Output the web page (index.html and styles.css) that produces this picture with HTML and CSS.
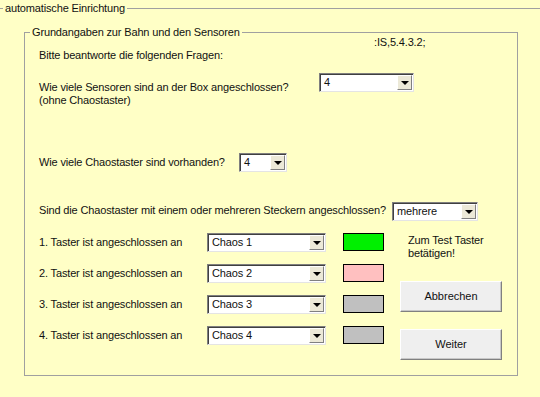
FILE: index.html
```html
<!DOCTYPE html>
<html>
<head>
  <link rel="stylesheet" href="styles.css">
</head>
<body>
  <fieldset class="outer-group">
    <legend>automatische Einrichtung</legend>

    <fieldset class="inner-group">
      <legend>Grundangaben zur Bahn und den Sensoren</legend>
      <div class="group-body">
        <div class="code">:IS,5.4.3.2;</div>
        <div class="intro">Bitte beantworte die folgenden Fragen:</div>

        <div class="question q-sensors">
          <div class="label">Wie viele Sensoren sind an der Box angeschlossen?<br>(ohne Chaostaster)</div>
          <div class="combo combo-sensors"><span>4</span><i class="combo-btn"></i></div>
        </div>

        <div class="question q-chaos">
          <div class="label">Wie viele Chaostaster sind vorhanden?</div>
          <div class="combo combo-small"><span>4</span><i class="combo-btn"></i></div>
        </div>

        <div class="question q-plugs">
          <div class="label">Sind die Chaostaster mit einem oder mehreren Steckern angeschlossen?</div>
          <div class="combo combo-plugs"><span>mehrere</span><i class="combo-btn"></i></div>
        </div>

        <div class="taster-area">
          <div class="taster-rows">
            <div class="taster-row">
              <div class="label">1. Taster ist angeschlossen an</div>
              <div class="combo combo-taster"><span>Chaos 1</span><i class="combo-btn"></i></div>
              <div class="lamp lamp-on"></div>
            </div>
            <div class="taster-row">
              <div class="label">2. Taster ist angeschlossen an</div>
              <div class="combo combo-taster"><span>Chaos 2</span><i class="combo-btn"></i></div>
              <div class="lamp lamp-pink"></div>
            </div>
            <div class="taster-row">
              <div class="label">3. Taster ist angeschlossen an</div>
              <div class="combo combo-taster"><span>Chaos 3</span><i class="combo-btn"></i></div>
              <div class="lamp"></div>
            </div>
            <div class="taster-row">
              <div class="label">4. Taster ist angeschlossen an</div>
              <div class="combo combo-taster"><span>Chaos 4</span><i class="combo-btn"></i></div>
              <div class="lamp"></div>
            </div>
          </div>

          <div class="side">
            <div class="hint">Zum Test Taster<br>betätigen!</div>
            <button class="btn btn-cancel">Abbrechen</button>
            <button class="btn btn-next">Weiter</button>
          </div>
        </div>
      </div>
    </fieldset>
  </fieldset>
</body>
</html>
```

FILE: styles.css
```css
html, body {
  margin: 0;
  width: 540px;
  height: 397px;
  overflow: hidden;
}
body {
  background-color: #ffffc6;
  font-family: "Liberation Sans", Arial, sans-serif;
  font-size: 11px;
  line-height: 13px;
  letter-spacing: -0.15px;
  color: #111;
}

/* group boxes */
fieldset {
  margin: 0;
  padding: 0;
  border: 1px solid #a0a0a0;
  min-width: 0;
}
legend {
  padding: 0 2px;
  line-height: 13px;
}
.outer-group {
  margin: 2px 0 0 -2px;
  width: 560px;
  height: 395px;
  border-bottom: 0;
}
.outer-group > legend {
  margin-left: 4px;
}
.inner-group {
  margin: 11px 0 0 25px;
  width: 494px;
  height: 350px;
  box-sizing: border-box;
}
.inner-group > legend {
  margin-left: 5px;
}
.group-body {
  padding-left: 14px;
}

.code {
  margin: -3px 0 0 335px;
}

/* question rows */
.question {
  display: flex;
  align-items: flex-start;
}
.question .label {
  flex: none;
}
.q-sensors {
  margin-top: 11px;
}
.q-sensors .label {
  width: 280px;
  margin-top: 8px;
}
.q-chaos {
  margin-top: 46px;
}
.q-chaos .label {
  width: 200px;
  margin-top: 3px;
}
.q-plugs {
  margin-top: 30px;
}
.q-plugs .label {
  width: 353px;
  margin-top: 2px;
  white-space: nowrap;
}

/* combo boxes */
.combo {
  position: relative;
  flex: none;
  height: 19px;
  box-sizing: border-box;
  background: #fff;
  border: 1px solid;
  border-color: #7f7f7f #e4e4e4 #e4e4e4 #7f7f7f;
  box-shadow: inset 1px 1px 0 #404040;
  line-height: 17px;
}
.combo span {
  padding-left: 4px;
}
.combo-btn {
  position: absolute;
  top: 1px;
  right: 1px;
  bottom: 1px;
  width: 15px;
  box-sizing: border-box;
  background: #ece9d8;
  border: 1px solid;
  border-color: #fff #808080 #808080 #fff;
}
.combo-btn::after {
  content: "";
  position: absolute;
  left: 3px;
  top: 5px;
  border-left: 4px solid transparent;
  border-right: 4px solid transparent;
  border-top: 4px solid #000;
}
.combo-sensors {
  width: 95px;
}
.combo-small {
  width: 48px;
}
.combo-plugs {
  width: 86px;
}
.combo-taster {
  width: 119px;
}

/* taster rows */
.taster-area {
  display: flex;
  margin-top: 12px;
}
.taster-rows {
  display: flex;
  flex-direction: column;
  gap: 12px;
}
.taster-row {
  display: flex;
  align-items: flex-start;
}
.taster-row .label {
  width: 168px;
  margin-top: 3px;
}
.lamp {
  width: 41px;
  height: 18px;
  box-sizing: border-box;
  margin-left: 17px;
  border: 1px solid #000;
  background: #c0c0c0;
}
.lamp-on {
  background: #00f000;
}
.lamp-pink {
  background: #ffc0c0;
}

.side {
  display: flex;
  flex-direction: column;
  align-items: flex-start;
  margin-left: 16px;
}
.hint {
  margin: 1px 0 0 8px;
}
.btn {
  width: 102px;
  height: 31px;
  padding: 0;
  font: inherit;
  color: #111;
  background: #efefef;
  border: 1px solid;
  border-color: #fff #808080 #808080 #fff;
  box-shadow: inset -1px -1px 0 #c8c8c8;
}
.btn-cancel {
  margin-top: 21px;
}
.btn-next {
  margin-top: 17px;
}
```
